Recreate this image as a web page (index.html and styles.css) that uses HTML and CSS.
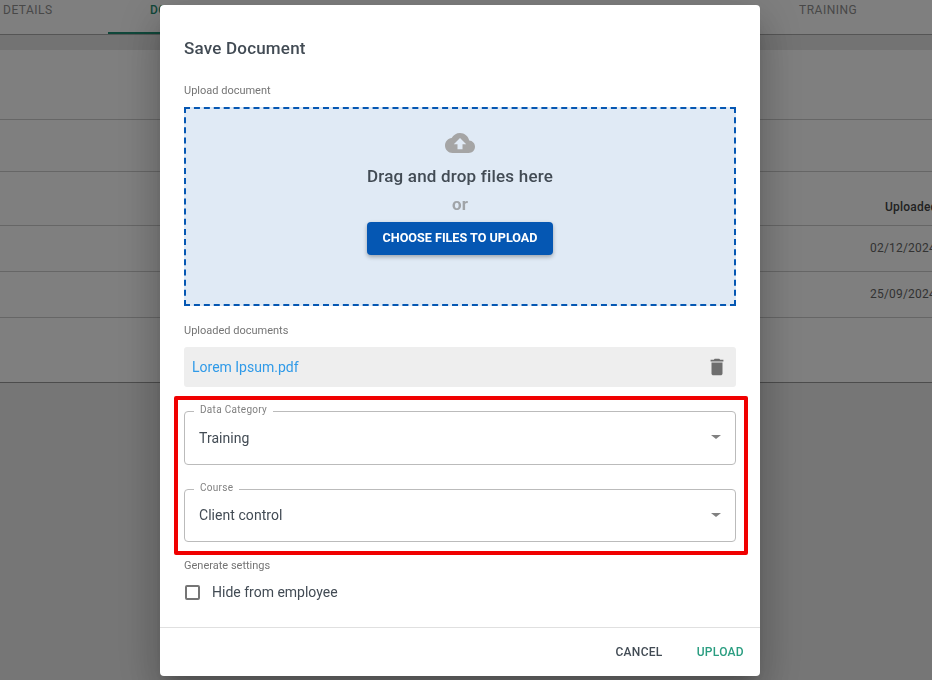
FILE: index.html
```html
<!DOCTYPE html>
<html lang="en">
<head>
    <meta charset="UTF-8">
    <title>Save Document</title>
    <link rel="stylesheet" href="styles.css">
</head>
<body>
    <!-- Page behind the dialog -->
    <div class="page">
        <div class="tabs">
            <span class="tab tab-details">DETAILS</span>
            <span class="tab tab-documents">DOCUMENTS</span>
            <span class="tab tab-training">TRAINING</span>
        </div>
        <div class="band"></div>
        <div class="row row-a"></div>
        <div class="row row-b"></div>
        <div class="row row-head"><span class="cell cell-head">Uploaded</span></div>
        <div class="row row-data"><span class="cell">02/12/2024</span></div>
        <div class="row row-data"><span class="cell">25/09/2024</span></div>
        <div class="row row-end"></div>
    </div>

    <div class="backdrop"></div>

    <!-- Save Document dialog -->
    <div class="dialog">
        <div class="dialog-body">
            <h2 class="dialog-title">Save Document</h2>

            <div class="section-label label-upload">Upload document</div>
            <div class="dropzone">
                <svg class="cloud" viewBox="0 0 24 24">
                    <path d="M19.35 10.04C18.67 6.59 15.64 4 12 4 9.11 4 6.6 5.64 5.35 8.04 2.34 8.36 0 10.91 0 14c0 3.31 2.69 6 6 6h13c2.76 0 5-2.24 5-5 0-2.64-2.05-4.78-4.65-4.96zM14 13v4h-4v-4H7l5-5 5 5h-3z"/>
                </svg>
                <div class="drop-text">Drag and drop files here</div>
                <div class="drop-or">or</div>
                <button class="choose-button">CHOOSE FILES TO UPLOAD</button>
            </div>

            <div class="section-label label-uploaded">Uploaded documents</div>
            <div class="file-row">
                <a class="file-link" href="#">Lorem Ipsum.pdf</a>
                <svg class="trash" viewBox="0 0 24 24">
                    <path d="M6 19c0 1.1.9 2 2 2h8c1.1 0 2-.9 2-2V7H6v12zM19 4h-3.5l-1-1h-5l-1 1H5v2h14V4z"/>
                </svg>
            </div>

            <div class="highlight">
                <div class="select-field field-category">
                    <span class="select-label">Data Category</span>
                    <span class="select-value">Training</span>
                    <span class="select-arrow"></span>
                </div>
                <div class="select-field field-course">
                    <span class="select-label">Course</span>
                    <span class="select-value">Client control</span>
                    <span class="select-arrow"></span>
                </div>
            </div>

            <div class="section-label label-settings">Generate settings</div>
            <label class="check-row">
                <span class="checkbox"></span>
                <span>Hide from employee</span>
            </label>
        </div>
        <div class="dialog-actions">
            <button class="text-button">CANCEL</button>
            <button class="text-button upload">UPLOAD</button>
        </div>
    </div>
</body>
</html>
```

FILE: styles.css
```css
html, body {
    height: 100%;
}
body {
    margin: 0;
    overflow: hidden;
    font-family: Roboto, "Liberation Sans", sans-serif;
    background-color: #fff;
    color: #424b54;
}

/* page behind the dialog */
.page {
    height: 680px;
    overflow: hidden;
    color: #666;
    background-color: #ececec;
}
.tabs {
    display: flex;
    height: 34px;
    border-bottom: 1px solid #aaa;
    background-color: #fff;
    font-size: 12px;
    line-height: 20px;
    letter-spacing: 0.5px;
    white-space: nowrap;
}
.tab {
    color: #909090;
    box-sizing: border-box;
}
.tab-details {
    width: 108px;
    padding-left: 3px;
}
.tab-documents {
    width: 100px;
    height: 34px;
    padding-left: 42px;
    border-bottom: 2px solid #1f8f74;
    color: #1f8f74;
    font-weight: 500;
}
.tab-training {
    margin-left: 591px;
}
.band {
    height: 15px;
    background-color: #e6e6e6;
}
.row {
    position: relative;
    box-sizing: border-box;
    border-bottom: 1px solid #ccc;
    background-color: #fff;
}
.row-a { height: 70px; }
.row-b { height: 52px; }
.row-head { height: 54px; }
.row-data { height: 46px; }
.row-end { height: 65px; border-bottom-color: #999; }
.cell {
    position: absolute;
    left: 870px;
    top: 15px;
    font-size: 12px;
    letter-spacing: 0.2px;
    white-space: nowrap;
}
.cell-head {
    left: 885px;
    top: 28px;
    color: #444;
    font-weight: 500;
}
.backdrop {
    position: fixed;
    inset: 0;
    background-color: rgba(0, 0, 0, 0.5);
}

/* dialog */
.dialog {
    position: fixed;
    left: 160px;
    top: 5px;
    width: 600px;
    height: 671px;
    display: flex;
    flex-direction: column;
    background-color: #fff;
    border-radius: 4px;
    box-shadow: 0 11px 15px -7px rgba(0, 0, 0, 0.2), 0 24px 38px 3px rgba(0, 0, 0, 0.14), 0 9px 46px 8px rgba(0, 0, 0, 0.12);
}
.dialog-body {
    flex: 1;
    padding: 0 24px;
}
.dialog-title {
    margin: 32px 0 0;
    font-size: 17px;
    font-weight: 500;
    line-height: 22px;
    letter-spacing: 0.2px;
}
.section-label {
    font-size: 11px;
    line-height: 14px;
    color: #757575;
}
.label-upload { margin-top: 25px; }
.label-uploaded { margin-top: 18px; }
.label-settings { margin-top: 4px; }

.dropzone {
    height: 199px;
    margin-top: 9px;
    box-sizing: border-box;
    border: 2px dashed #0557b3;
    background-color: #e0eaf5;
    display: flex;
    flex-direction: column;
    align-items: center;
}
.cloud {
    fill: #a5a5a5;
    width: 30px;
    height: 30px;
    margin-top: 19px;
}
.drop-text {
    margin-top: 6px;
    font-size: 17px;
    font-weight: 500;
    line-height: 24px;
    letter-spacing: 0.2px;
}
.drop-or {
    margin-top: 6px;
    font-size: 17px;
    font-weight: 700;
    line-height: 20px;
    color: #a0a4a8;
}
.choose-button {
    margin-top: 8px;
    width: 186px;
    height: 33px;
    padding: 0 0 2px;
    border: none;
    border-radius: 4px;
    background-color: #0557b3;
    color: #fff;
    font-family: inherit;
    font-size: 12.6px;
    font-weight: 700;
    box-shadow: 0 2px 4px rgba(0, 0, 0, 0.3);
}

.file-row {
    height: 40px;
    margin-top: 9px;
    padding: 0 8px;
    display: flex;
    align-items: center;
    justify-content: space-between;
    background-color: #eee;
    border-radius: 3px;
}
.file-link {
    font-size: 14px;
    color: #2f9ae8;
    text-decoration: none;
}
.trash {
    width: 22px;
    height: 22px;
    fill: #6e6e6e;
}

.highlight {
    margin: 9px -12px 0 -10px;
    padding: 11px 8px 9px 6px;
    border: 4px solid #f00000;
    border-radius: 2px;
    display: flex;
    flex-direction: column;
    gap: 24px;
}
.select-field {
    position: relative;
    padding: 0 14px;
    box-sizing: border-box;
    border: 1px solid #bbb;
    border-radius: 4px;
    display: flex;
    align-items: center;
}
.field-category { height: 54px; }
.field-course {
    height: 53px;
    padding-bottom: 2px;
}
.select-label {
    position: absolute;
    left: 9px;
    top: -8px;
    padding: 0 6px;
    background-color: #fff;
    font-size: 10px;
    line-height: 12px;
    letter-spacing: 0.3px;
    color: #808080;
}
.field-category .select-label { height: 9px; }
.field-course .select-label { height: 9px; }
.select-value {
    font-size: 14px;
    letter-spacing: 0.05px;
}
.select-arrow {
    position: absolute;
    right: 14px;
    top: 23px;
    border-left: 5px solid transparent;
    border-right: 5px solid transparent;
    border-top: 4.5px solid #808080;
}

.check-row {
    margin-top: 11px;
    display: flex;
    align-items: center;
    gap: 12px;
    font-size: 14px;
}
.checkbox {
    width: 11px;
    height: 11px;
    margin-left: 1px;
    border: 2px solid #757575;
    border-radius: 2px;
}

.dialog-actions {
    height: 48px;
    padding-right: 16px;
    border-top: 1px solid #e0e0e0;
    display: flex;
    align-items: center;
    justify-content: flex-end;
    gap: 34px;
}
.text-button {
    padding: 0;
    border: none;
    background: none;
    font-family: inherit;
    font-size: 12px;
    font-weight: 500;
    letter-spacing: 0.3px;
    color: #424b54;
}
.upload {
    color: #2a9d80;
}
```
